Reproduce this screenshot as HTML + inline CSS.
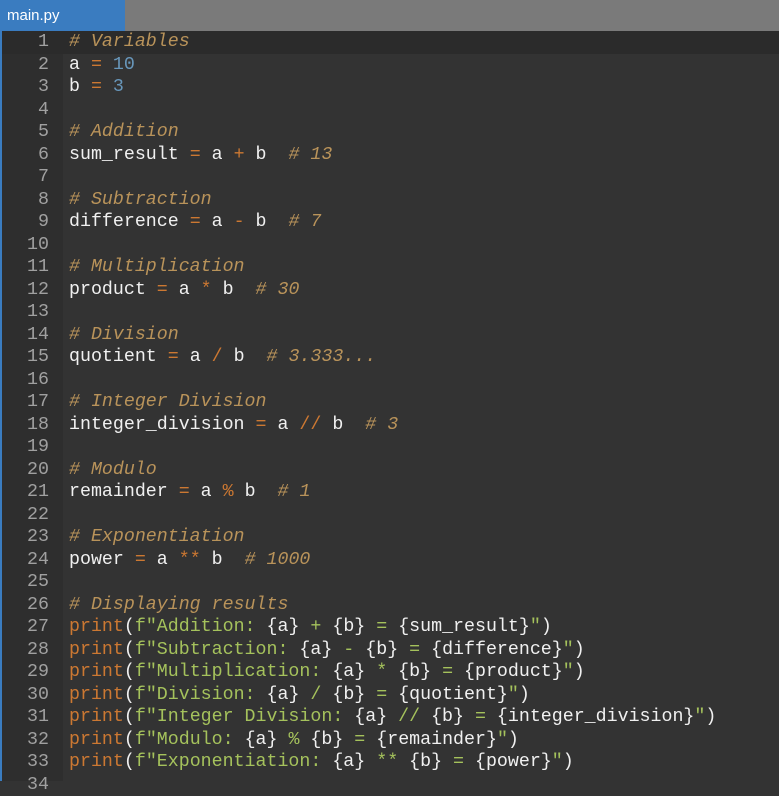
<!DOCTYPE html>
<html><head><style>
html,body{margin:0;padding:0;width:779px;height:781px;overflow:hidden;background:#333333;}
.tabbar{position:absolute;left:0;top:0;width:779px;height:31px;background:#7a7a7a;}
.tab{position:absolute;left:0;top:0;width:125px;height:31px;background:#3a7cc0;color:#fff;font:15px "Liberation Sans",sans-serif;line-height:31px;padding-left:7px;box-sizing:border-box;}
.gut{position:absolute;left:0;top:31px;width:63px;height:750px;background:#2e2e2e;border-left:2px solid #3a7cc0;box-sizing:border-box;}
.hl{position:absolute;left:2px;top:31px;width:777px;height:22.5px;background:#2b2b2b;}
.code{position:absolute;left:0;top:31px;font-family:"Liberation Mono","DejaVu Sans Mono",monospace;font-size:18.3px;line-height:22.5px;white-space:pre;}
.ln{position:absolute;left:0;width:49px;text-align:right;color:#a0a0a0;}
.tx{position:absolute;left:69px;color:#f0f0f0;}
.c{color:#b9935a;font-style:italic}.o{color:#cc7832}.n{color:#6897bb}.s{color:#a5c25c}
</style></head><body>
<div class="tabbar"><div class="tab">main.py</div></div>
<div class="gut"></div>
<div class="hl"></div>
<div class="code" id="c"></div>
<script>
var L=[
'<span class="c"># Variables</span>',
'a <span class="o">=</span> <span class="n">10</span>',
'b <span class="o">=</span> <span class="n">3</span>',
'',
'<span class="c"># Addition</span>',
'sum_result <span class="o">=</span> a <span class="o">+</span> b  <span class="c"># 13</span>',
'',
'<span class="c"># Subtraction</span>',
'difference <span class="o">=</span> a <span class="o">-</span> b  <span class="c"># 7</span>',
'',
'<span class="c"># Multiplication</span>',
'product <span class="o">=</span> a <span class="o">*</span> b  <span class="c"># 30</span>',
'',
'<span class="c"># Division</span>',
'quotient <span class="o">=</span> a <span class="o">/</span> b  <span class="c"># 3.333...</span>',
'',
'<span class="c"># Integer Division</span>',
'integer_division <span class="o">=</span> a <span class="o">//</span> b  <span class="c"># 3</span>',
'',
'<span class="c"># Modulo</span>',
'remainder <span class="o">=</span> a <span class="o">%</span> b  <span class="c"># 1</span>',
'',
'<span class="c"># Exponentiation</span>',
'power <span class="o">=</span> a <span class="o">**</span> b  <span class="c"># 1000</span>',
'',
'<span class="c"># Displaying results</span>',
'<span class="o">print</span>(<span class="s">f"Addition: </span>{a}<span class="s"> + </span>{b}<span class="s"> = </span>{sum_result}<span class="s">"</span>)',
'<span class="o">print</span>(<span class="s">f"Subtraction: </span>{a}<span class="s"> - </span>{b}<span class="s"> = </span>{difference}<span class="s">"</span>)',
'<span class="o">print</span>(<span class="s">f"Multiplication: </span>{a}<span class="s"> * </span>{b}<span class="s"> = </span>{product}<span class="s">"</span>)',
'<span class="o">print</span>(<span class="s">f"Division: </span>{a}<span class="s"> / </span>{b}<span class="s"> = </span>{quotient}<span class="s">"</span>)',
'<span class="o">print</span>(<span class="s">f"Integer Division: </span>{a}<span class="s"> // </span>{b}<span class="s"> = </span>{integer_division}<span class="s">"</span>)',
'<span class="o">print</span>(<span class="s">f"Modulo: </span>{a}<span class="s"> % </span>{b}<span class="s"> = </span>{remainder}<span class="s">"</span>)',
'<span class="o">print</span>(<span class="s">f"Exponentiation: </span>{a}<span class="s"> ** </span>{b}<span class="s"> = </span>{power}<span class="s">"</span>)',
''
];
var h='';for(var i=0;i<L.length;i++){var t=i*22.5;h+='<div class="ln" style="top:'+t+'px">'+(i+1)+'</div><div class="tx" style="top:'+t+'px">'+L[i]+'</div>';}
document.getElementById('c').innerHTML=h;
</script>
</body></html>
